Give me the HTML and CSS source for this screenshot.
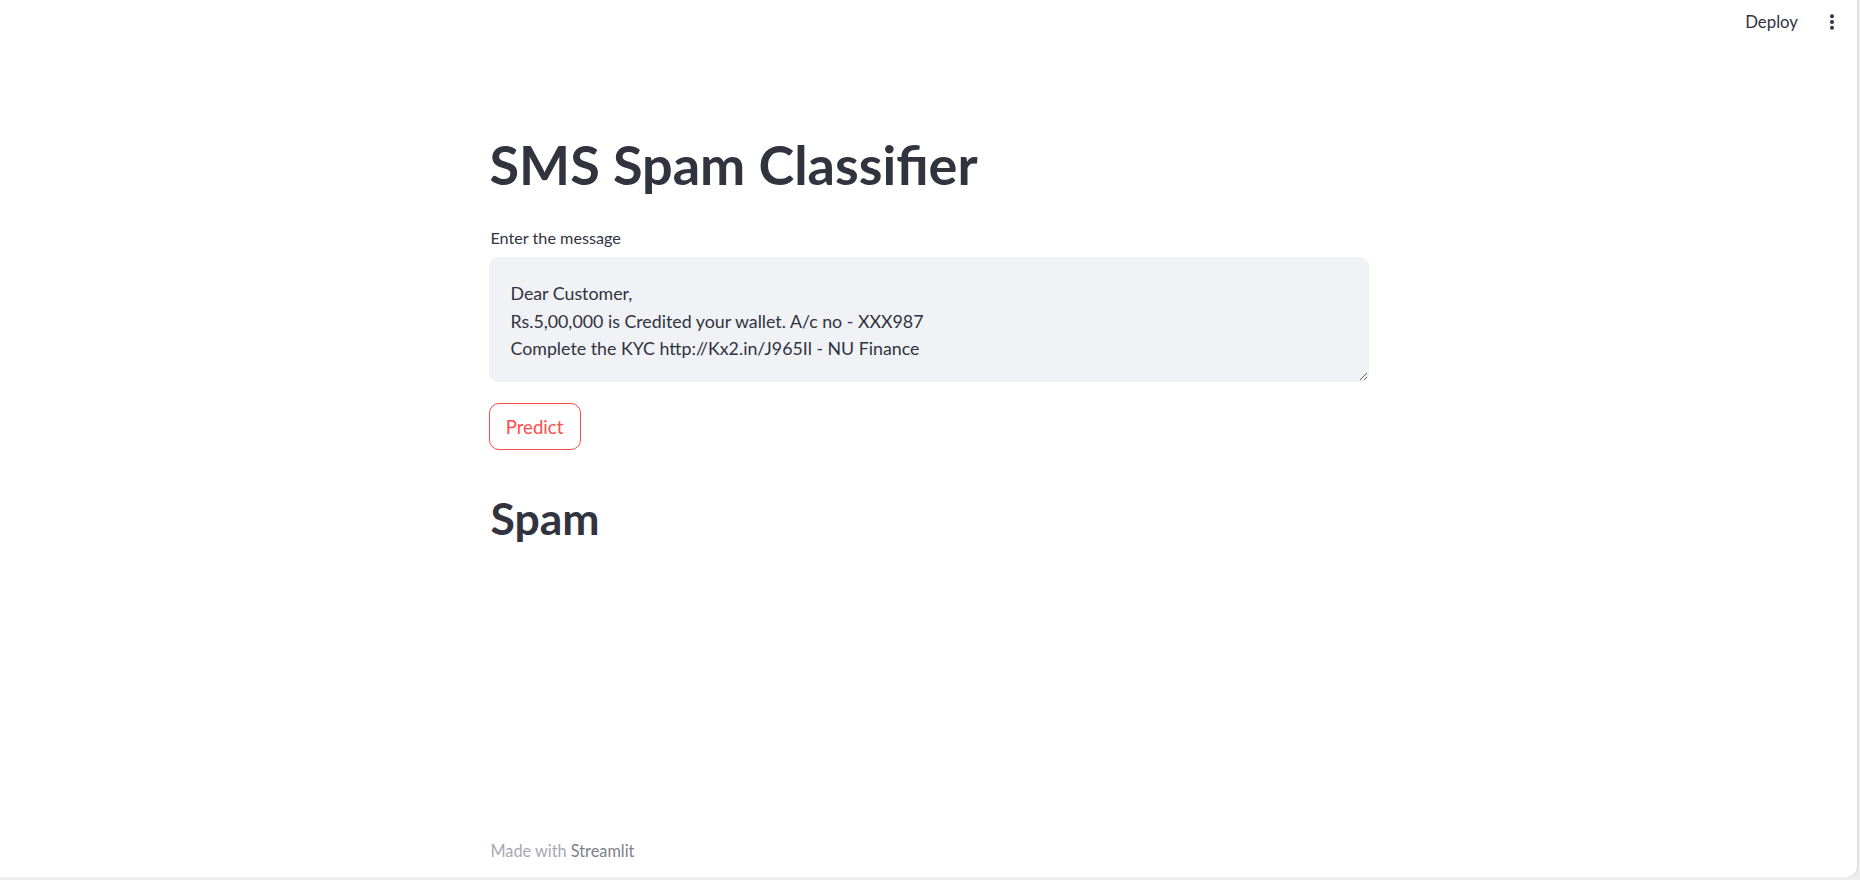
FILE: index.html
```html
<!DOCTYPE html>
<html lang="en">
<head>
<meta charset="utf-8">
<title>SMS Spam Classifier</title>
<link rel="stylesheet" href="styles.css">
</head>
<body>
<div class="app">
  <header class="header">
    <span class="deploy">Deploy</span>
    <span class="menu">
      <svg width="6" height="16" viewBox="0 0 6 16"><circle cx="3" cy="2.2" r="2"/><circle cx="3" cy="8" r="2"/><circle cx="3" cy="13.8" r="2"/></svg>
    </span>
  </header>
  <main class="main">
    <h1 class="title">SMS Spam Classifier</h1>
    <label class="label" for="msg">Enter the message</label>
    <textarea id="msg" class="input">Dear Customer,
Rs.5,00,000 is Credited your wallet. A/c no - XXX987
Complete the KYC http://Kx2.in/J965Il - NU Finance</textarea>
    <button class="btn">Predict</button>
    <h2 class="result">Spam</h2>
    <footer class="footer">Made with <span class="brand">Streamlit</span></footer>
  </main>
</div>
</body>
</html>
```

FILE: styles.css
```css
* { box-sizing: border-box; }
html, body { margin: 0; padding: 0; }
body {
  background: #efefef;
  font-family: Lato, "Noto Sans", sans-serif;
  color: #31333f;
}
.app {
  width: 1857px;
  height: 877px;
  background: #ffffff;
  border-bottom-right-radius: 10px;
  box-shadow: 0 0 3px rgba(0,0,0,0.22);
  display: flex;
  flex-direction: column;
}
.header {
  height: 44px;
  flex: none;
  display: flex;
  justify-content: flex-end;
  align-items: center;
  padding-right: 22px;
  gap: 31px;
}
.deploy {
  font-size: 16.8px;
  line-height: 1.2;
  color: #31333f;
}
.menu { display: flex; align-items: center; }
.menu svg { fill: #31333f; display: block; }
.main {
  width: 880px;
  margin: 0 auto;
  flex: 1;
  display: flex;
  flex-direction: column;
  align-items: flex-start;
  padding-top: 89px;
  padding-bottom: 16px;
}
.title {
  margin: 0;
  font-size: 54px;
  line-height: 1.2;
  font-weight: 700;
  padding-left: 1px;
}
.label {
  margin-top: 30px;
  font-size: 16.2px;
  line-height: 1.2;
  padding-left: 2px;
}
.input {
  margin-top: 10px;
  width: 880px;
  height: 125px;
  background: #f0f2f6;
  border: 1px solid #f0f2f6;
  border-radius: 9px;
  padding: 22px 21px 10px;
  font-family: inherit;
  font-size: 17.8px;
  line-height: 27.4px;
  color: #31333f;
  resize: vertical;
  outline: none;
}
.btn {
  margin-top: 21px;
  width: 92px;
  height: 47px;
  border: 1px solid #ff4b4b;
  border-radius: 10px;
  background: #ffffff;
  color: #ff4b4b;
  font-family: inherit;
  font-size: 18.6px;
  padding: 0;
}
.result {
  margin: 41px 0 0 0;
  font-size: 44.5px;
  line-height: 1.2;
  font-weight: 700;
  padding-left: 2px;
}
.footer {
  margin-top: auto;
  font-size: 16.3px;
  line-height: 1.2;
  color: #a7a9b2;
  padding-left: 2px;
}
.brand { color: #7d808a; }
```
